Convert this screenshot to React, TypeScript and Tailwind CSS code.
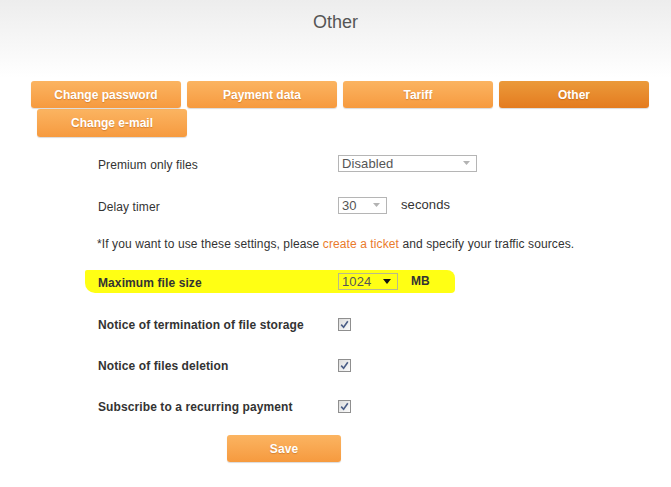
const tabs = [
  { title: 'Change password', active: false },
  { title: 'Payment data', active: false },
  { title: 'Tariff', active: false },
  { title: 'Other', active: true },
];

const tabBase =
  'flex h-[27px] w-[150px] items-center justify-center rounded-[3px] text-[12px] font-bold text-white [text-shadow:0_1px_1px_rgba(150,70,0,0.35)] shadow-[0_1px_1px_rgba(0,0,0,0.15)]';

const Tab = ({ title, active }: { title: string; active?: boolean }) => (
  <div
    className={
      tabBase +
      (active
        ? ' bg-gradient-to-b from-[#eb9a3a] to-[#e47b1e]'
        : ' bg-gradient-to-b from-[#fbb461] to-[#f69a3e]')
    }
  >
    {title}
  </div>
);

const Select = ({
  value,
  width,
  dark,
}: {
  value: string;
  width: string;
  dark?: boolean;
}) => (
  <div
    className={`flex h-[17px] items-center justify-between border pl-[3px] pr-[6px] text-[13px] leading-none ${width} ${
      dark ? 'border-[#b9b98a] bg-transparent text-[#555]' : 'border-[#b5b5b5] bg-white text-[#555]'
    }`}
  >
    <span>{value}</span>
    {dark ? (
      <svg width="8" height="5" viewBox="0 0 8 5">
        <path d="M0 0h8L4 5z" fill="#111" />
      </svg>
    ) : (
      <svg width="7" height="4" viewBox="0 0 7 4">
        <path d="M0 0h7L3.5 4z" fill="#b3b3b3" />
      </svg>
    )}
  </div>
);

const Checkbox = () => (
  <div className="flex h-[13px] w-[13px] items-center justify-center border border-[#8f8f8f] bg-gradient-to-br from-[#dcdcdc] to-[#fbfbfb]">
    <svg width="9" height="9" viewBox="0 0 9 9">
      <path d="M1.2 4.6 3.6 7.2 7.8 1.2" fill="none" stroke="#4a5d86" strokeWidth="1.6" />
    </svg>
  </div>
);

const CheckRow = ({ label }: { label: string }) => (
  <div className="flex h-[41px] items-center">
    <div className="w-[240px] pt-[1px] text-[12px] font-bold text-[#333]">{label}</div>
    <Checkbox />
  </div>
);

export default function App() {
  return (
    <div className="h-[487px] w-[671px] overflow-hidden bg-white font-['Liberation_Sans',Arial,sans-serif]">
      {/* header */}
      <div className="h-[78px] bg-gradient-to-b from-[#ededed] to-[#ffffff] pt-[9px] text-center text-[18px] text-[#555]">
        Other
      </div>

      {/* tabs */}
      <div className="mt-[3px] flex gap-[6px] pl-[31px]">
        {tabs.map((t) => (
          <Tab key={t.title} title={t.title} active={t.active} />
        ))}
      </div>
      <div className="mt-[1px] pl-[37px]">
        <div className={tabBase + ' h-[28px] bg-gradient-to-b from-[#fbb461] to-[#f69a3e]'}>
          Change e-mail
        </div>
      </div>

      {/* form */}
      <div className="mt-[5px] text-[12px] tracking-[0.1px] text-[#333]">
        <div className="flex h-[42px] items-center pl-[98px]">
          <div className="w-[240px] pt-[4px]">Premium only files</div>
          <Select value="Disabled" width="w-[139px]" />
        </div>
        <div className="flex h-[42px] items-center pl-[98px]">
          <div className="w-[240px] pt-[4px]">Delay timer</div>
          <Select value="30" width="w-[49px]" />
          <span className="ml-[14px] text-[13px]">seconds</span>
        </div>
        <div className="flex h-[36px] items-center pl-[97px]">
          <p>
            *If you want to use these settings, please{' '}
            <span className="text-[#ea7b2c]">create a ticket</span> and specify your traffic
            sources.
          </p>
        </div>
        <div className="flex h-[38px] items-center pl-[85px]">
          <div className="flex h-[23px] w-[370px] items-center rounded-[2px_8px_4px_10px] bg-[#ffff14] pl-[13px]">
            <div className="w-[240px] pt-[3px] font-bold text-[#333]">Maximum file size</div>
            <Select value="1024" width="w-[60px]" dark />
            <span className="ml-[13px] font-bold">MB</span>
          </div>
        </div>
        <div className="mt-[4px] pl-[98px]">
          <CheckRow label="Notice of termination of file storage" />
          <CheckRow label="Notice of files deletion" />
          <CheckRow label="Subscribe to a recurring payment" />
        </div>
        <div className="mt-[8px] pl-[227px]">
          <div className="flex h-[27px] w-[114px] items-center justify-center rounded-[3px] bg-gradient-to-b from-[#fbb461] to-[#f69a3e] text-[12px] font-bold text-white shadow-[0_1px_1px_rgba(0,0,0,0.15)] [text-shadow:0_1px_1px_rgba(150,70,0,0.35)]">
            Save
          </div>
        </div>
      </div>
    </div>
  );
}
